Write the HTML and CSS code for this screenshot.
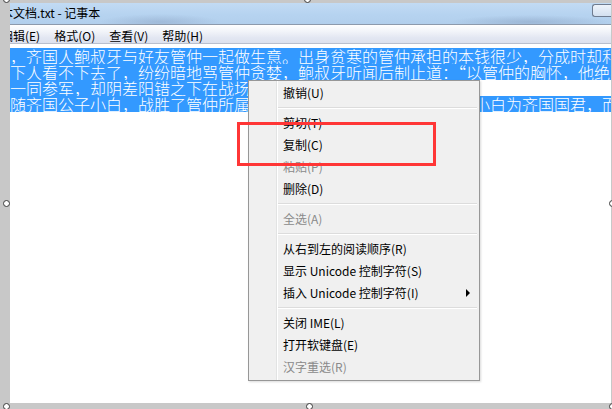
FILE: index.html
```html
<!DOCTYPE html>
<html lang="zh-CN">
<head>
<meta charset="utf-8">
<title>记事本</title>
<link rel="stylesheet" href="styles.css">
</head>
<body>
<div class="screen">
  <div class="window">
    <div class="titlebar">
      <span class="title">本文档.txt - 记事本</span>
      <span class="caption-btn"></span>
    </div>
    <div class="menubar">
      <span class="menu-item first">编辑(E)</span>
      <span class="menu-item">格式(O)</span>
      <span class="menu-item">查看(V)</span>
      <span class="menu-item">帮助(H)</span>
    </div>
    <div class="editor">
      <div class="line"><span class="sel">，齐国人鲍叔牙与好友管仲一起做生意。出身贫寒的管仲承担的本钱很少，分成时却利润拿得很多</span></div>
      <div class="line"><span class="sel">下人看不下去了，纷纷暗地骂管仲贪婪，鲍叔牙听闻后制止道：<span class="fw">“</span>以管仲的胸怀，他绝不是贪图钱财的人</span></div>
      <div class="line"><span class="sel">一同参军，却阴差阳错之下在战场上屡屡后退。</span></div>
      <div class="line"><span class="sel">随齐国公子小白，战胜了管仲所属的公子纠一方，并成功扶持公子小白为齐国国君，而鲍叔牙</span></div>
    </div>
  </div>

  <div class="ctx">
    <div class="ctx-item">撤销(U)</div>
    <div class="ctx-sep"></div>
    <div class="ctx-item">剪切(T)</div>
    <div class="ctx-item">复制(C)</div>
    <div class="ctx-item disabled">粘贴(P)</div>
    <div class="ctx-item">删除(D)</div>
    <div class="ctx-sep"></div>
    <div class="ctx-item disabled">全选(A)</div>
    <div class="ctx-sep"></div>
    <div class="ctx-item">从右到左的阅读顺序(R)</div>
    <div class="ctx-item">显示 Unicode 控制字符(S)</div>
    <div class="ctx-item has-sub">插入 Unicode 控制字符(I)<span class="arrow"></span></div>
    <div class="ctx-sep"></div>
    <div class="ctx-item">关闭 IME(L)</div>
    <div class="ctx-item">打开软键盘(E)</div>
    <div class="ctx-item disabled">汉字重选(R)</div>
  </div>

  <div class="mark"></div>

  <span class="handle h-tl"></span>
  <span class="handle h-tm"></span>
  <span class="handle h-ml"></span>
  <span class="handle h-mr"></span>
  <span class="handle h-bl"></span>
  <span class="handle h-bm"></span>
  <span class="handle h-br"></span>
</div>
</body>
</html>
```

FILE: styles.css
```css
html, body {
  margin: 0;
  padding: 0;
}

body {
  width: 612px;
  height: 409px;
  overflow: hidden;
  background: #c8c8c8;
  font-family: "Noto Sans CJK SC", "Noto Sans", sans-serif;
}

.screen {
  position: relative;
  width: 612px;
  height: 409px;
  box-sizing: border-box;
  padding: 3px 1px 6px 10px;
}

.window {
  height: 400px;
  display: flex;
  flex-direction: column;
  overflow: hidden;
  background: #fff;
}

.titlebar {
  height: 21px;
  flex-shrink: 0;
  display: flex;
  align-items: flex-start;
  justify-content: space-between;
  border-bottom: 1px solid #8d9aac;
  background:
    radial-gradient(ellipse 60px 8px at 150px 19px, rgba(110,130,165,0.28), rgba(110,130,165,0) 100%),
    radial-gradient(ellipse 80px 7px at 520px 19px, rgba(100,120,155,0.28), rgba(100,120,155,0) 100%),
    linear-gradient(#c2dbf4 0%, #b6d3f0 55%, #b2cfec 100%);
  overflow: hidden;
}

.title {
  margin-left: -9px;
  padding-top: 2px;
  font-size: 12px;
  line-height: 16px;
  color: #000;
  white-space: nowrap;
}

.caption-btn {
  flex-shrink: 0;
  width: 18px;
  height: 11px;
  margin-top: 1px;
  border: 1px solid #6f7c90;
  border-right: none;
  border-radius: 3px 0 0 3px;
  background: linear-gradient(#eef3fa, #d3e0f0);
}

.menubar {
  height: 15px;
  padding-top: 3px;
  flex-shrink: 0;
  display: flex;
  font-size: 12px;
  line-height: 15px;
  color: #000;
  border-bottom: 1px solid #b9bfce;
  background: linear-gradient(#ffffff 0%, #f4f6fa 30%, #e3e7f2 70%, #dce1ee 100%);
  white-space: nowrap;
}

.menu-item {
  padding: 0 7px;
}

.menu-item.first {
  margin-left: -16px;
}

.editor {
  flex: 1;
  padding-top: 4px;
  background: #fff;
  font-size: 16px;
  line-height: 16px;
  font-weight: 300;
  white-space: nowrap;
  overflow: hidden;
  color: #000;
}

.line {
  height: 16px;
  overflow: visible;
}

.sel {
  display: inline-block;
  height: 16px;
  line-height: 16px;
  vertical-align: top;
  background: #3399ff;
  color: #fff;
}

.fw {
  font-feature-settings: "fwid";
}

.ctx {
  position: absolute;
  left: 248px;
  top: 80px;
  width: 232px;
  box-sizing: border-box;
  padding: 1px 2px 2px 2px;
  border: 1px solid #979797;
  box-shadow: 1px 1px 2px rgba(0,0,0,0.15);
  background:
    linear-gradient(to right, transparent 27px, #e2e3e3 27px, #e2e3e3 28px, #ffffff 28px, #ffffff 29px, transparent 29px),
    #f0f0f0;
  font-size: 12px;
  color: #000;
}

.ctx-item {
  height: 22px;
  line-height: 22px;
  padding-left: 32px;
  padding-right: 7px;
  display: flex;
  align-items: center;
  white-space: nowrap;
}

.ctx-item.disabled {
  color: #8a8a8a;
}

.arrow {
  margin-left: auto;
  width: 0;
  height: 0;
  border-top: 4px solid transparent;
  border-bottom: 4px solid transparent;
  border-left: 4px solid #000;
}

.ctx-sep {
  height: 8px;
  margin-left: 27px;
  background: linear-gradient(transparent 3px, #dcdcdc 3px, #dcdcdc 4px, #ffffff 4px, #ffffff 5px, transparent 5px);
}

.mark {
  position: absolute;
  left: 237px;
  top: 122px;
  width: 199px;
  height: 44px;
  box-sizing: border-box;
  border: 3px solid #ff3636;
}

.handle {
  position: absolute;
  width: 7px;
  height: 7px;
  box-sizing: border-box;
  border: 1px solid #3a3a3a;
  border-radius: 50%;
  background: #fff;
}

.h-tl { left: 3px; top: -4px; }
.h-tm { left: 304px; top: -4px; }
.h-ml { left: 3px; top: 200px; }
.h-mr { left: 609px; top: 200px; }
.h-bl { left: 3px; top: 403px; }
.h-bm { left: 306px; top: 403px; }
.h-br { left: 609px; top: 403px; }
```
